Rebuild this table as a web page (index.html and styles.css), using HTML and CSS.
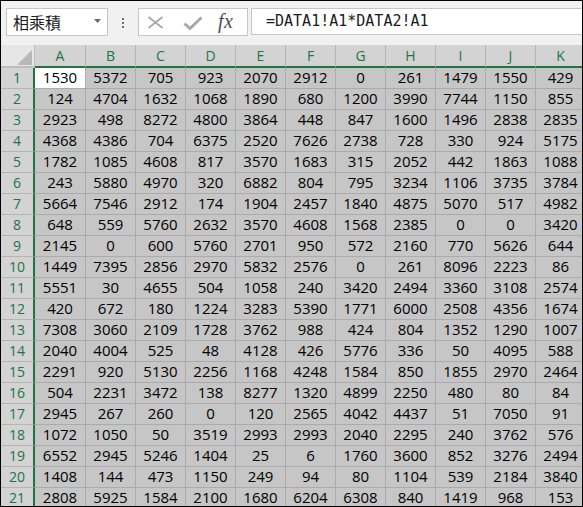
FILE: index.html
```html
<!DOCTYPE html>
<html lang="zh-Hant">
<head>
<meta charset="utf-8">
<title>相乘積</title>
<link rel="stylesheet" href="styles.css">
</head>
<body>
<div class="frame">
  <div class="toolbar">
    <div class="namebox"><span class="name">相乘積</span><svg class="caret" width="7" height="4" viewBox="0 0 7 4"><path d="M0 0H7L3.5 4Z" fill="#6b6b6b"/></svg></div>
    <div class="dots"><i></i><i></i><i></i></div>
    <div class="fxbox">
      <svg class="cancel" width="17" height="13" viewBox="0 0 17 13"><path d="M1.5 1L15.5 12M15.5 1L1.5 12" stroke="#a9a9a9" stroke-width="1.8" fill="none"/></svg>
      <svg class="enter" width="20" height="14" viewBox="0 0 20 14"><path d="M1.5 7.5L7 12.5L18.5 1.5" stroke="#a9a9a9" stroke-width="3" fill="none"/></svg>
      <span class="fx">fx</span>
    </div>
    <div class="formula">=DATA1!A1*DATA2!A1</div>
  </div>
  <div class="sheet">
    <div class="corner"><span class="tri"></span></div>
    <div class="ch">A</div><div class="ch">B</div><div class="ch">C</div><div class="ch">D</div><div class="ch">E</div><div class="ch">F</div><div class="ch">G</div><div class="ch">H</div><div class="ch">I</div><div class="ch">J</div><div class="ch">K</div>

    <div class="rh">1</div><div class="c active">1530</div><div class="c">5372</div><div class="c">705</div><div class="c">923</div><div class="c">2070</div><div class="c">2912</div><div class="c">0</div><div class="c">261</div><div class="c">1479</div><div class="c">1550</div><div class="c">429</div>
    <div class="rh">2</div><div class="c">124</div><div class="c">4704</div><div class="c">1632</div><div class="c">1068</div><div class="c">1890</div><div class="c">680</div><div class="c">1200</div><div class="c">3990</div><div class="c">7744</div><div class="c">1150</div><div class="c">855</div>
    <div class="rh">3</div><div class="c">2923</div><div class="c">498</div><div class="c">8272</div><div class="c">4800</div><div class="c">3864</div><div class="c">448</div><div class="c">847</div><div class="c">1600</div><div class="c">1496</div><div class="c">2838</div><div class="c">2835</div>
    <div class="rh">4</div><div class="c">4368</div><div class="c">4386</div><div class="c">704</div><div class="c">6375</div><div class="c">2520</div><div class="c">7626</div><div class="c">2738</div><div class="c">728</div><div class="c">330</div><div class="c">924</div><div class="c">5175</div>
    <div class="rh">5</div><div class="c">1782</div><div class="c">1085</div><div class="c">4608</div><div class="c">817</div><div class="c">3570</div><div class="c">1683</div><div class="c">315</div><div class="c">2052</div><div class="c">442</div><div class="c">1863</div><div class="c">1088</div>
    <div class="rh">6</div><div class="c">243</div><div class="c">5880</div><div class="c">4970</div><div class="c">320</div><div class="c">6882</div><div class="c">804</div><div class="c">795</div><div class="c">3234</div><div class="c">1106</div><div class="c">3735</div><div class="c">3784</div>
    <div class="rh">7</div><div class="c">5664</div><div class="c">7546</div><div class="c">2912</div><div class="c">174</div><div class="c">1904</div><div class="c">2457</div><div class="c">1840</div><div class="c">4875</div><div class="c">5070</div><div class="c">517</div><div class="c">4982</div>
    <div class="rh">8</div><div class="c">648</div><div class="c">559</div><div class="c">5760</div><div class="c">2632</div><div class="c">3570</div><div class="c">4608</div><div class="c">1568</div><div class="c">2385</div><div class="c">0</div><div class="c">0</div><div class="c">3420</div>
    <div class="rh">9</div><div class="c">2145</div><div class="c">0</div><div class="c">600</div><div class="c">5760</div><div class="c">2701</div><div class="c">950</div><div class="c">572</div><div class="c">2160</div><div class="c">770</div><div class="c">5626</div><div class="c">644</div>
    <div class="rh">10</div><div class="c">1449</div><div class="c">7395</div><div class="c">2856</div><div class="c">2970</div><div class="c">5832</div><div class="c">2576</div><div class="c">0</div><div class="c">261</div><div class="c">8096</div><div class="c">2223</div><div class="c">86</div>
    <div class="rh">11</div><div class="c">5551</div><div class="c">30</div><div class="c">4655</div><div class="c">504</div><div class="c">1058</div><div class="c">240</div><div class="c">3420</div><div class="c">2494</div><div class="c">3360</div><div class="c">3108</div><div class="c">2574</div>
    <div class="rh">12</div><div class="c">420</div><div class="c">672</div><div class="c">180</div><div class="c">1224</div><div class="c">3283</div><div class="c">5390</div><div class="c">1771</div><div class="c">6000</div><div class="c">2508</div><div class="c">4356</div><div class="c">1674</div>
    <div class="rh">13</div><div class="c">7308</div><div class="c">3060</div><div class="c">2109</div><div class="c">1728</div><div class="c">3762</div><div class="c">988</div><div class="c">424</div><div class="c">804</div><div class="c">1352</div><div class="c">1290</div><div class="c">1007</div>
    <div class="rh">14</div><div class="c">2040</div><div class="c">4004</div><div class="c">525</div><div class="c">48</div><div class="c">4128</div><div class="c">426</div><div class="c">5776</div><div class="c">336</div><div class="c">50</div><div class="c">4095</div><div class="c">588</div>
    <div class="rh">15</div><div class="c">2291</div><div class="c">920</div><div class="c">5130</div><div class="c">2256</div><div class="c">1168</div><div class="c">4248</div><div class="c">1584</div><div class="c">850</div><div class="c">1855</div><div class="c">2970</div><div class="c">2464</div>
    <div class="rh">16</div><div class="c">504</div><div class="c">2231</div><div class="c">3472</div><div class="c">138</div><div class="c">8277</div><div class="c">1320</div><div class="c">4899</div><div class="c">2250</div><div class="c">480</div><div class="c">80</div><div class="c">84</div>
    <div class="rh">17</div><div class="c">2945</div><div class="c">267</div><div class="c">260</div><div class="c">0</div><div class="c">120</div><div class="c">2565</div><div class="c">4042</div><div class="c">4437</div><div class="c">51</div><div class="c">7050</div><div class="c">91</div>
    <div class="rh">18</div><div class="c">1072</div><div class="c">1050</div><div class="c">50</div><div class="c">3519</div><div class="c">2993</div><div class="c">2993</div><div class="c">2040</div><div class="c">2295</div><div class="c">240</div><div class="c">3762</div><div class="c">576</div>
    <div class="rh">19</div><div class="c">6552</div><div class="c">2945</div><div class="c">5246</div><div class="c">1404</div><div class="c">25</div><div class="c">6</div><div class="c">1760</div><div class="c">3600</div><div class="c">852</div><div class="c">3276</div><div class="c">2494</div>
    <div class="rh">20</div><div class="c">1408</div><div class="c">144</div><div class="c">473</div><div class="c">1150</div><div class="c">249</div><div class="c">94</div><div class="c">80</div><div class="c">1104</div><div class="c">539</div><div class="c">2184</div><div class="c">3840</div>
    <div class="rh">21</div><div class="c">2808</div><div class="c">5925</div><div class="c">1584</div><div class="c">2100</div><div class="c">1680</div><div class="c">6204</div><div class="c">6308</div><div class="c">840</div><div class="c">1419</div><div class="c">968</div><div class="c">153</div>
  </div>
</div>
</body>
</html>
```
FILE: styles.css
```css
html, body {
  margin: 0;
  padding: 0;
  background: #fff;
}

.frame {
  width: 583px;
  height: 507px;
  box-sizing: border-box;
  border: 1px solid #000;
  overflow: hidden;
  background: #f1f1f1;
}

.toolbar {
  height: 44px;
  box-sizing: border-box;
  padding: 7px 0 0 5px;
  display: flex;
  align-items: flex-start;
}

.namebox {
  width: 102px;
  height: 28px;
  box-sizing: border-box;
  border: 1px solid #c6c6c6;
  background: #fff;
  display: flex;
  align-items: center;
  padding-left: 6px;
  padding-right: 6px;
}

.name {
  font-family: "Noto Sans CJK TC", "Noto Sans CJK SC", sans-serif;
  font-size: 16px;
  color: #1a1a1a;
  line-height: 20px;
}

.caret {
  margin-left: auto;
  margin-top: -2px;
}

.dots {
  width: 30px;
  height: 28px;
  display: flex;
  flex-direction: column;
  align-items: center;
  justify-content: center;
  gap: 2px;
  padding-top: 1px;
  box-sizing: border-box;
}

.dots i {
  width: 2px;
  height: 2px;
  background: #6f6f6f;
  display: block;
}

.fxbox {
  width: 110px;
  height: 28px;
  box-sizing: border-box;
  border: 1px solid #c6c6c6;
  background: #fff;
  display: flex;
  align-items: center;
  padding-left: 8px;
}

.cancel {
  margin-top: 1px;
}

.enter {
  margin-left: 19px;
  margin-top: 1px;
}

.fx {
  margin-left: 15px;
  font-family: "Liberation Serif", "DejaVu Serif", serif;
  font-style: italic;
  font-size: 20px;
  line-height: 20px;
  color: #4d4d4d;
  letter-spacing: 0.5px;
  margin-top: -2px;
}

.formula {
  margin-left: 3px;
  flex: 1;
  height: 27px;
  box-sizing: border-box;
  border: 1px solid #c6c6c6;
  border-right: none;
  background: #fff;
  padding-left: 14px;
  font-family: "DejaVu Sans Mono", "Liberation Mono", monospace;
  font-size: 15px;
  line-height: 25px;
  color: #1a1a1a;
  white-space: nowrap;
}

.sheet {
  display: grid;
  grid-template-columns: 34px 51px repeat(10, 50px);
  grid-template-rows: 23px;
  grid-auto-rows: 21px;
}

.corner {
  background: #e6e6e6;
  box-sizing: border-box;
  border-right: 1px solid #bdbdbd;
  border-bottom: 2px solid #bdbdbd;
  position: relative;
}

.tri {
  position: absolute;
  right: 2px;
  bottom: 1px;
  width: 0;
  height: 0;
  border-left: 15px solid transparent;
  border-bottom: 15px solid #b8b8b8;
}

.ch {
  background: #d3d3d3;
  box-sizing: border-box;
  border-right: 1px solid #b4b4b4;
  border-bottom: 2px solid #217346;
  color: #217346;
  font-family: "Open Sans", "Noto Sans", sans-serif;
  font-size: 14px;
  line-height: 15px;
  padding-top: 3px;
  text-align: center;
}

.rh {
  background: #d3d3d3;
  box-sizing: border-box;
  border-right: 2px solid #217346;
  border-bottom: 1px solid #b4b4b4;
  color: #217346;
  font-family: "Open Sans", "Noto Sans", sans-serif;
  font-size: 14px;
  line-height: 20px;
  text-align: center;
}

.c {
  background: #c6c6c6;
  box-sizing: border-box;
  border-right: 1px solid #ababab;
  border-bottom: 1px solid #ababab;
  color: #000;
  font-family: "Open Sans", "Noto Sans", sans-serif;
  font-size: 15px;
  line-height: 19px;
  text-align: center;
  white-space: nowrap;
}

.c.active {
  background: #fff;
}
```
